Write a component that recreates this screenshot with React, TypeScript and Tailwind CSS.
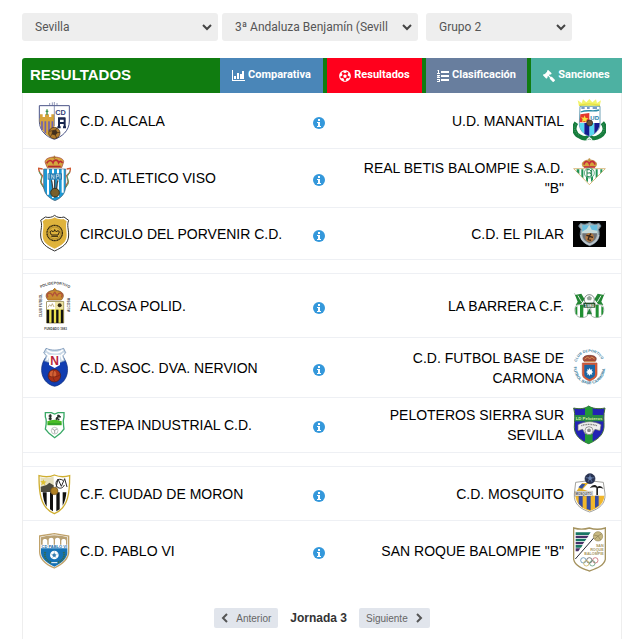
import React from 'react';
import { FaFutbol, FaGavel } from 'react-icons/fa';

interface CrestProps {
  box: string;
  size: string;
  children: React.ReactNode;
}

const Crest: React.FC<CrestProps> = ({ box, size, children }) => (
  <svg viewBox={box} className={`block w-[33px] ${size}`} aria-hidden="true">
    {children}
  </svg>
);

const Alcala = () => (
  <Crest box="54 20 99 114" size="h-[38px]">
    <path d="M58 31h90v46c0 31-24 48-45 55-24-8-45-25-45-55z" fill="#fff" stroke="#4a5487" strokeWidth="3" />
    <path d="M59 69h44v62C80 122 60 106 59 78z" fill="#d6a43c" />
    <path d="M60 57h8v8h7v-8h12v8h7v-8h9v14H60z" fill="#d6a43c" />
    <path d="M81 42v17M77 48h8" stroke="#3c8e4d" strokeWidth="4" />
    <path d="M66 78v26M76 78v36M87 78v30M97 78v22" stroke="#6d62b0" strokeWidth="5" />
    <path d="M103 32v60M89 23v9M97 21v11M111 23v9M103 20v12" stroke="#5c6796" strokeWidth="2" />
    <text x="106" y="58" fontSize="22" fontWeight="bold" fontFamily="Liberation Sans, sans-serif" fill="#34417a">CD</text>
    <path d="M117 96V70h17v26M117 83h17M112 96h10M129 96h9M114 69h22" stroke="#18264f" strokeWidth="6" fill="none" />
    <circle cx="103" cy="113" r="17" fill="#b07b2c" stroke="#3b2b1c" strokeWidth="2" />
    <path d="M98 106l9-2 5 8-6 7-10-3zM88 108l10-2M96 116l-5 8M106 119l4 9M112 112l8-1M107 104l4-6" fill="#43301d" stroke="#3b2b1c" strokeWidth="2" />
  </Crest>
);

const Viso = () => (
  <Crest box="54 177 99 144" size="h-[48px]">
    <path d="M68 222l-13-2 4 12 8 10-5 18 8 15 8 15M140 222l12-2-3 12-9 10 5 18-8 15-8 15" fill="none" stroke="#cf5a33" strokeWidth="4" />
    <path d="M57 230l8 14-2 22 8 12M150 230l-8 14 3 22-8 12" fill="none" stroke="#4da06a" strokeWidth="3" />
    <path d="M76 204c-4-10 9-18 27-18s32 8 27 18l-5 14H82z" fill="#d4a63f" stroke="#a13c32" strokeWidth="2" />
    <path d="M80 205c5-11 15-11 19-2 3-10 14-10 17 0 4-7 9-4 11 1" fill="none" stroke="#bd2c34" strokeWidth="5" />
    <path d="M103 182v10M98 187h10" stroke="#a9722c" strokeWidth="3" />
    <path d="M84 214h38" stroke="#b32b2e" strokeWidth="4" />
    <path d="M71 222h66v50c0 24-14 38-32 45-20-8-34-22-34-45z" fill="#1d9ad6" stroke="#4f6272" strokeWidth="2" />
    <path d="M84 223v76M99 223v86M114 223v83M128 223v70" stroke="#fff" strokeWidth="6" />
    <path d="M83 235h43v19H83z" fill="#267bb0" />
    <path d="M87 251v-14M95 251v-12l7 12v-12M109 251v-13h7v6h-7M120 238v13" fill="none" stroke="#e8f3f5" strokeWidth="2" />
    <path d="M94 256c4 10 2 16 5 27M114 256c-4 10-2 16-5 27M104 254v32" stroke="#444" strokeWidth="4" fill="none" />
    <circle cx="105" cy="293" r="13" fill="#79602b" stroke="#373424" strokeWidth="3" />
  </Crest>
);

const Circulo = () => (
  <Crest box="54 114 99 123" size="h-[41px]">
    <path d="M104 121c7 7 18 8 28 5l14 10c-6 15 0 26 0 44 0 27-20 37-42 48-24-11-42-22-42-48 0-18 6-29 0-44l14-10c10 3 21 1 28-5z" fill="#fff" stroke="#333" strokeWidth="3" />
    <path d="M104 127c8 6 18 7 27 5l9 7c-4 14 0 24 0 42 0 22-17 31-36 40-20-9-36-18-36-40 0-18 5-28 0-42l9-7c9 2 19 1 27-5z" fill="#dfb33c" />
    <circle cx="104" cy="174" r="23" fill="none" stroke="#32270f" strokeWidth="4" strokeDasharray="4 1" />
    <circle cx="104" cy="174" r="18" fill="none" stroke="#987928" strokeWidth="2" />
    <path d="M94 180l-4-9c2-5 8-5 9 0 2-6 9-6 10 0 2-5 8-5 9 0l-4 9zM94 184h20M104 163v6" fill="none" stroke="#30240e" strokeWidth="3" />
  </Crest>
);

const Alcosa = () => (
  <Crest box="54 27 99 159" size="h-[53px]">
    <defs>
      <path id="alcosa-top" d="M62 54q43-22 86 0" />
      <path id="alcosa-left" d="M65 142V66" />
      <path id="alcosa-right" d="M151 126V78" />
    </defs>
    <g fontFamily="Liberation Sans, sans-serif" fontWeight="bold" fill="#444">
      <text fontSize="11"><textPath href="#alcosa-top">POLIDEPORTIVO</textPath></text>
      <text fontSize="10"><textPath href="#alcosa-left">CLUB FUTBOL</textPath></text>
      <text fontSize="10"><textPath href="#alcosa-right">ALCOSA</textPath></text>
      <text x="73" y="179" fontSize="9">FUNDADO 1983</text>
    </g>
    <path d="M84 90c-13-14-3-29 20-29 23 0 34 15 20 29z" fill="#c98c33" stroke="#754b25" strokeWidth="2" />
    <path d="M84 82c-8-14 8-17 14-5l6-11 7 11c6-12 22-9 13 5" fill="none" stroke="#b0503a" strokeWidth="4" />
    <path d="M104 54v12M99 59h10M84 88h40" stroke="#bd7d27" strokeWidth="4" />
    <path d="M80 95h51v64H80z" fill="#ebe14f" stroke="#695b2d" strokeWidth="2" />
    <path d="M81 96h24v22H81z" fill="#fff" />
    <path d="M105 96h25v22h-25z" fill="#eee3a4" />
    <path d="M84 112l5-8 4 5 4-8 5 10" stroke="#a48a51" fill="none" strokeWidth="2" />
    <circle cx="119" cy="106" r="6" fill="#352913" />
    <path d="M84 119v40M98 119v40M112 119v40M126 119v40" stroke="#111" strokeWidth="7" />
  </Crest>
);

const Nervion = () => (
  <Crest box="54 219 99 147" size="h-[49px]">
    <path d="M76 264c-21 29-13 76 28 85 40-9 49-56 27-85z" fill="#123eb1" stroke="#0c2c75" strokeWidth="2" />
    <path d="M78 235c16 7 36 7 53 0l6 13-8 9 6 15-20 8H93l-20-7 6-16-8-8z" fill="#c9d8e6" stroke="#5e7ea7" strokeWidth="2" />
    <path d="M81 239c7 12 39 12 47 0M77 249l9 8-5 13M132 249l-9 8 5 13" fill="none" stroke="#fff" strokeWidth="5" />
    <path d="M87 254h33v31l-16 9-17-9z" fill="#fff" />
    <text x="91" y="285" fontSize="36" fontWeight="bold" fontFamily="Liberation Sans, sans-serif" fill="#b91f3a">N</text>
    <circle cx="103" cy="317" r="19" fill="#a73118" stroke="#3b2330" strokeWidth="2" />
    <circle cx="99" cy="312" r="10" fill="#d36135" />
    <path d="M85 318c12 4 25 4 36-4M103 299c-7 12-5 25 2 36" stroke="#72210f" strokeWidth="2" fill="none" />
  </Crest>
);

const Estepa = () => (
  <Crest box="54 65 99 84" size="h-[28px]">
    <path d="M76 70h18l10 4 10-4h18v13c-5 13-1 24 0 36l-11 13-17 13-17-13-11-13c2-12 6-25 0-36z" fill="#fff" stroke="#39a966" strokeWidth="4" />
    <path d="M82 96c14-6 29-6 43 0v12H82z" fill="#49bd26" />
    <path d="M91 75v18M86 80h9M86 88h9M108 91l10-14M112 78l10 6M108 85l10 6" stroke="#252f29" strokeWidth="5" />
    <path d="M84 104h40" stroke="#238a2f" strokeWidth="3" />
    <circle cx="104" cy="124" r="10" fill="#fff" stroke="#a2aaa5" strokeWidth="2" />
    <path d="M97 119l7 4 7-4M104 123v9" stroke="#777" strokeWidth="2" fill="none" />
  </Crest>
);

const Moron = () => (
  <Crest box="54 246 99 129" size="h-[43px]">
    <path d="M57 257c18 5 34 4 46-2 14 6 30 7 46 2 0 46-2 96-46 114-44-18-46-68-46-114z" fill="#fff" stroke="#cfae30" strokeWidth="4" />
    <path d="M61 262c16 3 30 2 40-3v46H63z" fill="#e5dfbd" />
    <path d="M62 290l18-5 8-7 13 8v20H63z" fill="#4d4b40" />
    <path d="M70 268l3 6 7 1-6 4 2 7-6-4-7 4 3-7-5-5 7-1z" fill="#dec030" />
    <path d="M108 293l6-26 10 22 10-23 7 25M129 271c-15-9-24 3-20 15 4 12 20 11 24-1" fill="none" stroke="#292929" strokeWidth="3" />
    <path d="M65 306h76c-3 27-13 49-38 60-24-11-36-32-38-60z" fill="#fff" />
    <path d="M68 307h12v43c-8-12-11-27-12-43zM90 307h9v57l-9-6zM109 307h10v51l-10 6zM128 307h11c-1 15-4 28-11 40z" fill="#111" />
    <circle cx="103" cy="303" r="11" fill="#b08125" stroke="#71511e" strokeWidth="2" />
  </Crest>
);

const Pablo = () => (
  <Crest box="54 67 99 108" size="h-[36px]">
    <path d="M59 76l44-7 43 7v47c0 25-23 39-43 49-23-10-44-24-44-49z" fill="#fff" stroke="#c0a26a" strokeWidth="4" />
    <path d="M63 80c12-4 25-6 40-6 13 0 28 2 39 6v22H63z" fill="#b9a173" />
    <path d="M68 103V91c0-8 14-8 14 0v12zM86 103V88c0-9 15-9 15 0v15zM105 103V88c0-9 15-9 15 0v15zM124 103V91c0-8 14-8 14 0v12z" fill="#fff" />
    <path d="M63 113h79v14c-2 20-22 32-39 41-18-9-38-21-40-41z" fill="#1672b5" />
    <text x="103" y="112" fontSize="12" textAnchor="middle" fontWeight="bold" fontFamily="Liberation Sans, sans-serif" fill="#176ba8">CD PABLO VI</text>
    <path d="M76 124c-5 15 4 27 18 32M131 124c5 15-4 27-18 32" stroke="#356c52" strokeWidth="6" strokeDasharray="4 2" fill="none" />
    <circle cx="103" cy="133" r="13" fill="#fff" />
    <path d="M103 128l5 4-2 6h-6l-3-6zM103 120v8M91 129l6 3M115 129l-6 3M96 144l4-6M110 144l-4-6" fill="#357daf" stroke="#357daf" strokeWidth="1" />
    <path d="M94 156h18" stroke="#fff" strokeWidth="3" />
  </Crest>
);

const Manantial = () => (
  <Crest box="99 9 99 135" size="h-[45px]">
    <path d="M117 33l-4-17 12 8 4-11 10 9 9-10 9 10 11-9 3 11 12-8-4 17z" fill="#f2f46c" />
    <path d="M117 31c20-6 42-6 63 0" stroke="#e8e044" strokeWidth="4" fill="none" />
    <path d="M109 83c-10 14-8 33 11 42 10 6 21 5 28 0 8 6 21 6 31-1 18-10 19-29 8-41" fill="none" stroke="#167c3d" strokeWidth="13" />
    <path d="M107 88c-6 14-4 26 13 34M189 88c6 14 4 26-13 34" fill="none" stroke="#5fb27a" strokeWidth="2" strokeDasharray="3 4" />
    <path d="M120 34h60v53c0 17-13 29-32 38-18-8-30-21-30-38z" fill="#fff" stroke="#277391" strokeWidth="2" />
    <path d="M121 58l27-4v28h-29z" fill="#e4372e" />
    <path d="M134 61l3 8 8 1-6 5 1 7-7-4-7 3 2-8-5-6 8 1z" fill="#f7e33c" />
    <path d="M119 84h14v32c-9-8-14-16-14-29zM148 84h15v32l-15 8z" fill="#57d8f1" />
    <path d="M133 84h15v40l-15-8zM163 84h16c0 14-6 24-16 32z" fill="#151b90" />
    <path d="M122 51c22-9 36 1 55-6" fill="none" stroke="#2b8ba8" strokeWidth="4" />
    <path d="M124 39h10M141 39h8M158 39h13" fill="none" stroke="#4a7ab8" strokeWidth="5" />
    <text x="151" y="76" fontSize="18" fontWeight="bold" fontFamily="Liberation Sans, sans-serif" fill="#187ba9">UD</text>
    <circle cx="149" cy="84" r="9" fill="#684f38" stroke="#222" strokeWidth="2" />
    <path d="M140 134l8-6 8 6" stroke="#f2f5f2" strokeWidth="4" fill="none" />
  </Crest>
);

const Betis = () => (
  <Crest box="99 189 99 123" size="h-[41px]">
    <path d="M101 221h95l-48 48z" fill="#fff" stroke="#c69b45" strokeWidth="2" />
    <path d="M110 223v7l8 7v-14zM124 223h6v27l-6-6zM138 223h6v39l-6-6zM153 223h6v32l-6 6zM167 223h6v20l-6 6zM181 223h6v6l-6 7z" fill="#209455" />
    <path d="M130 216c-9-12 2-21 18-21s28 9 18 21z" fill="#d6a43c" stroke="#b27c2e" strokeWidth="2" />
    <path d="M132 209c2-13 13-11 16-3 3-9 14-10 17 3M132 216h33" fill="none" stroke="#c52d3d" strokeWidth="5" />
    <path d="M148 189v9M144 193h8" stroke="#b98a36" strokeWidth="2" />
    <circle cx="148" cy="234" r="15" fill="#fff" stroke="#19894b" strokeWidth="2" />
    <path d="M141 223v23M141 224h8q9 5 0 10h-8M149 234q11 6 0 11h-8M155 223v22" fill="none" stroke="#20824c" strokeWidth="3" />
  </Crest>
);

const Pilar = () => (
  <Crest box="99 375 99 78" size="h-[26px]">
    <path d="M99 375h99v78H99z" fill="#020202" />
    <path d="M122 382c9 4 17 4 27-3 9 7 18 7 28 3l6 8-7 10c5 22 0 39-27 49-27-11-32-27-26-49l-7-10z" fill="#a8b5b8" stroke="#697f8e" strokeWidth="3" />
    <path d="M127 387c15 2 31 2 45 0v24h-45z" fill="#68bddd" />
    <path d="M126 407l14-8 8-13 7 15 17 3v9h-46z" fill="#c7dcdb" />
    <path d="M127 412h44c0 15-8 24-22 30-15-6-22-14-22-30z" fill="#6e7175" />
    <circle cx="149" cy="424" r="13" fill="#b37b43" />
    <path d="M139 418l9 2 5-7M148 420l-4 11M148 421l11 3M143 430l10 3" stroke="#35251b" strokeWidth="4" fill="none" />
    <path d="M122 417c2 17 13 25 27 29 13-4 25-14 27-29" fill="none" stroke="#c0c8cf" strokeWidth="4" />
  </Crest>
);

const Barrera = () => (
  <Crest box="99 65 99 81" size="h-[27px]">
    <path d="M103 69l36 54M194 69l-36 54" stroke="#829189" strokeWidth="2" />
    <path d="M105 74l19-4 10 17-12 15-15 2 6-10z" fill="#238633" />
    <path d="M192 74l-19-4-10 17 12 15 15 2-6-10z" fill="#238633" />
    <path d="M114 76l11 19M183 76l-11 19" stroke="#dcefe0" strokeWidth="3" />
    <circle cx="148" cy="88" r="15" fill="#fff" stroke="#40534a" strokeWidth="2" />
    <path d="M140 82l8-6 8 6-3 8h-10z" fill="#97a49c" />
    <path d="M108 106c12-6 26-3 36 6l-2 24c-9 9-26 7-33-2-5-9-6-19-1-28z" fill="#fff" stroke="#7a8f80" strokeWidth="2" />
    <path d="M188 106c-12-6-26-3-36 6l2 24c9 9 26 7 33-2 5-9 6-19 1-28z" fill="#fff" stroke="#7a8f80" strokeWidth="2" />
    <path d="M120 104h10v37h-10zM167 104h9v37h-9zM106 112l6-5v28l-5-5zM190 112l-6-5v28l5-5z" fill="#209032" />
    <path d="M130 97h36v15h-36z" fill="#22502c" />
    <text x="148" y="109" fontSize="13" textAnchor="middle" fontWeight="bold" fontFamily="Liberation Sans, sans-serif" fill="#fff">1980</text>
    <path d="M148 114l8 18h-16z" fill="#258039" />
  </Crest>
);

const Carmona = () => (
  <Crest box="99 233 99 111" size="h-[37px]">
    <defs>
      <path id="carmona-top" d="M110 272c10-40 66-40 78 0" />
      <path id="carmona-bottom" d="M101 286c3 70 92 70 95 0" />
    </defs>
    <g fontFamily="Liberation Sans, sans-serif" fontWeight="bold" fill="#387c9c">
      <text fontSize="11"><textPath href="#carmona-top">CLUB DEPORTIVO</textPath></text>
      <text fontSize="12"><textPath href="#carmona-bottom">FUTBOL BASE CARMONA</textPath></text>
    </g>
    <path d="M132 270c-9-13 4-18 17-18 14 0 25 6 17 18z" fill="#a74c39" stroke="#713b2d" strokeWidth="2" />
    <path d="M134 263l9-6 6 6 6-6 9 6M133 271h32" stroke="#d69455" strokeWidth="3" fill="none" />
    <path d="M127 275h44v32c0 12-10 17-22 22-12-5-22-10-22-22z" fill="#db5a35" stroke="#aa5341" strokeWidth="2" />
    <path d="M133 280h32v29c0 8-8 11-16 15-8-4-16-7-16-15z" fill="#1b66a5" />
    <path d="M149 290l2 5 6-1-2 5 5 3-5 3 2 5-6-1-2 5-3-5-5 1 2-5-5-3 5-3-2-5 5 1z" fill="#fff" />
  </Crest>
);

const Peloteros = () => (
  <Crest box="99 396 99 132" size="h-[44px]">
    <path d="M101 411c18 4 35 2 45-6 12 8 29 10 49 6-6 23-2 38-3 58-2 25-23 39-46 49-23-8-43-25-43-49 0-21 4-35-2-58z" fill="#2222b4" stroke="#416d37" strokeWidth="3" />
    <path d="M135 411l11-5 12 5v102l-12 5-11-5z" fill="#239a37" />
    <path d="M105 432h84v19h-84z" fill="#288945" />
    <text x="147" y="446" fontSize="13" textAnchor="middle" fontWeight="bold" fontFamily="Liberation Sans, sans-serif" fill="#d9ee9c">LD Peloteros</text>
    <path d="M114 461c21-12 49-12 69 0l-3 18-15-4-8 13h-22l-7-13-14 4z" fill="#eee" stroke="#6f746f" strokeWidth="2" />
    <circle cx="147" cy="479" r="12" fill="#f5f5f5" stroke="#686868" strokeWidth="2" />
    <path d="M124 464c15-5 31-5 47 0" stroke="#777" strokeWidth="4" strokeDasharray="3 2" fill="none" />
    <path d="M141 476l6-4 6 4-2 7h-8z" fill="#898989" />
  </Crest>
);

const Mosquito = () => (
  <Crest box="99 70 99 123" size="h-[41px]">
    <path d="M107 98l40-5 43 5 5 35c2 30-17 44-46 54-30-10-48-25-46-54z" fill="#fff" stroke="#73736c" strokeWidth="2" />
    <path d="M106 138h87c-1 24-20 38-44 46-24-8-41-22-43-46z" fill="#f1b72b" />
    <path d="M116 138h12v36l-12-12zM140 138h12v44l-12-4zM165 138h11v30l-11 7z" fill="#344ba5" />
    <path d="M110 124l16-23 20-2-18 20 18 6z" fill="#e4b12b" />
    <path d="M115 113l11-11 10 2-10 13z" fill="#3351a1" />
    <circle cx="150" cy="87" r="15" fill="#293453" stroke="#1d2745" strokeWidth="2" />
    <path d="M145 84l5-4 5 4-2 6h-6zM150 74v6M138 84l7 1M162 84l-7 1M144 97l3-7M156 97l-3-7" fill="#6d87b5" stroke="#6d87b5" strokeWidth="2" />
    <path d="M149 116c7-12 18-13 23-5 7-5 14-1 19 7-8-4-12-3-17-2v20h-5v-22c-8-2-14-1-20 2z" fill="#222" />
    <path d="M105 125h53v14h-53z" fill="#eee" stroke="#7d7a67" strokeWidth="1" />
    <text x="131" y="136" fontSize="9" textAnchor="middle" fontWeight="bold" fontFamily="Liberation Sans, sans-serif" fill="#454545">MOSQUITO</text>
  </Crest>
);

const SanRoque = () => (
  <Crest box="99 229 99 147" size="h-[49px]">
    <path d="M101 235c17 5 34 4 47 0 15 5 32 5 48 0v94c-4 20-29 28-48 35-19-7-43-15-47-35z" fill="#fff" stroke="#a5935f" strokeWidth="4" />
    <path d="M107 248h45l-6 8h-39zM107 267h33l-6 8h-27zM107 286h21l-5 8h-16z" fill="#197663" />
    <path d="M107 258h39l-5 7h-34zM107 277h26l-5 7h-21zM107 296h14l-6 9h-8z" fill="#493168" />
    <path d="M106 328l56-64" stroke="#282a35" strokeWidth="3" />
    <circle cx="174" cy="260" r="14" fill="#c6b780" stroke="#9a8d5e" strokeWidth="2" />
    <path d="M162 256l12 3 11-7M165 268l9-9 8 12" stroke="#8e8156" fill="none" strokeWidth="2" />
    <g fontFamily="Liberation Sans, sans-serif" fontWeight="bold" fontSize="11" fill="#a79663" textAnchor="end">
      <text x="191" y="292">SAN</text>
      <text x="191" y="304">ROQUE</text>
      <text x="191" y="316">BALOMPIE</text>
    </g>
    <g fill="none" strokeWidth="2">
      <circle cx="130" cy="332" r="8" stroke="#3c79a3" />
      <circle cx="148" cy="332" r="8" stroke="#444" />
      <circle cx="166" cy="332" r="8" stroke="#bb4650" />
      <circle cx="139" cy="341" r="8" stroke="#c3a13f" />
      <circle cx="157" cy="341" r="8" stroke="#458b65" />
    </g>
  </Crest>
);

const matchGroups = [
  [
    { home: 'C.D. ALCALA', away: 'U.D. MANANTIAL', homeCrest: <Alcala />, awayCrest: <Manantial /> },
    { home: 'C.D. ATLETICO VISO', away: 'REAL BETIS BALOMPIE S.A.D. "B"', homeCrest: <Viso />, awayCrest: <Betis /> },
    { home: 'CIRCULO DEL PORVENIR C.D.', away: 'C.D. EL PILAR', homeCrest: <Circulo />, awayCrest: <Pilar /> },
  ],
  [
    { home: 'ALCOSA POLID.', away: 'LA BARRERA C.F.', homeCrest: <Alcosa />, awayCrest: <Barrera /> },
    { home: 'C.D. ASOC. DVA. NERVION', away: 'C.D. FUTBOL BASE DE CARMONA', homeCrest: <Nervion />, awayCrest: <Carmona /> },
    { home: 'ESTEPA INDUSTRIAL C.D.', away: 'PELOTEROS SIERRA SUR SEVILLA', homeCrest: <Estepa />, awayCrest: <Peloteros /> },
  ],
  [
    { home: 'C.F. CIUDAD DE MORON', away: 'C.D. MOSQUITO', homeCrest: <Moron />, awayCrest: <Mosquito /> },
    { home: 'C.D. PABLO VI', away: 'SAN ROQUE BALOMPIE "B"', homeCrest: <Pablo />, awayCrest: <SanRoque /> },
  ],
];

const ChartIcon = () => (
  <svg viewBox="0 0 13 11" className="h-[11px] w-[13px]" fill="currentColor" aria-hidden="true">
    <path d="M0 0h1v10h12v1H0zM2 6h2v3H2zM5 3h2v6H5zM8 4h2v5H8zM10 1h2v8h-2z" />
  </svg>
);

const ListIcon = () => (
  <svg viewBox="0 0 12 12" className="h-3 w-3" fill="currentColor" aria-hidden="true">
    <path d="M4 1h8v2H4zM4 5h8v2H4zM4 9h8v2H4zM1 0h1v3h1v1H0V3h1V1H0zM0 5h3v1L1 7h2v1H0V7l1-1H0zM0 9h3v3H0v-1h2v-1H0z" />
  </svg>
);

const InfoIcon = () => (
  <svg viewBox="0 0 12 12" className="h-3 w-3" aria-hidden="true">
    <circle cx="6" cy="6" r="6" fill="#3498db" />
    <path d="M5 2h2v2H5zM4 5h3v4h1v1H4V9h1V6H4z" fill="#fff" />
  </svg>
);

const tabs = [
  { label: 'Comparativa', icon: <ChartIcon />, style: 'w-[103px] bg-[#4a86b8]' },
  { label: 'Resultados', icon: <FaFutbol className="h-3 w-3" />, style: 'w-[95px] bg-[#ff001c]' },
  { label: 'Clasificación', icon: <ListIcon />, style: 'w-[101px] bg-[#687e9e]' },
  { label: 'Sanciones', icon: <FaGavel className="h-3 w-3 -scale-x-100" />, style: 'w-[91px] bg-[#4db1a2]' },
];

interface FilterProps {
  label: string;
  value: string;
  width: string;
}

const Filter: React.FC<FilterProps> = ({ label, value, width }) => (
  <div className={`relative ${width}`}>
    <select
      aria-label={label}
      className="h-7 w-full appearance-none overflow-hidden rounded-[3px] bg-[#eee] pl-[13px] pr-[30px] font-[Roboto,sans-serif] text-xs text-[#555]"
    >
      <option>{value}</option>
    </select>
    <svg viewBox="0 0 10 7" className="pointer-events-none absolute right-1.5 top-[11px] h-[7px] w-[10px]" aria-hidden="true">
      <path d="M1 1l4 4 4-4" fill="none" stroke="#444" strokeWidth="2" />
    </svg>
  </div>
);

const Chevron: React.FC<{ d: string }> = ({ d }) => (
  <svg viewBox="0 0 7 10" className="h-[10px] w-[7px]" aria-hidden="true">
    <path d={d} fill="none" stroke="#555" strokeWidth="2" />
  </svg>
);

export default function App() {
  return (
    <main className="bg-white pl-[22px] pr-[10px] pt-[13px] font-['Liberation_Sans',Arial,sans-serif] text-black">
      <form className="mb-[17px] flex">
        <Filter label="Provincia" value="Sevilla" width="mr-1 w-[196px]" />
        <Filter label="Competición" value="3ª Andaluza Benjamín (Sevilla)" width="mr-2 w-[196px]" />
        <Filter label="Grupo" value="Grupo 2" width="w-[146px]" />
      </form>

      <section>
        <header className="flex h-[35px] items-center overflow-hidden rounded-tl-[3px] bg-[#107c10] text-white">
          <h1 className="flex-1 pl-2 text-[15px] font-bold">RESULTADOS</h1>
          <nav className="flex gap-1 self-stretch">
            {tabs.map((tab) => (
              <a
                key={tab.label}
                href="#"
                className={`flex items-center justify-center gap-[3px] font-[Roboto,sans-serif] text-[11px] font-bold ${tab.style}`}
              >
                {tab.icon}
                {tab.label}
              </a>
            ))}
          </nav>
        </header>

        <div className="border-x border-[#eee] pb-[11px]">
          <table className="w-full table-fixed border-separate border-spacing-0 text-sm">
            <colgroup>
              <col className="w-[57px]" />
              <col />
              <col className="w-16" />
              <col />
              <col className="w-[57px]" />
            </colgroup>
            {matchGroups.map((group, index) => (
              <tbody key={index} className="[&_td]:border-b [&_td]:border-[#eef0f4] last:[&_tr:last-child_td]:border-b-0">
                {index > 0 && (
                  <tr>
                    <td colSpan={5} className="h-[14px] p-0" />
                  </tr>
                )}
                {group.map((match) => (
                  <tr key={match.home}>
                    <td className="py-[5px] pl-[15px]">{match.homeCrest}</td>
                    <td className="leading-5">{match.home}</td>
                    <td className="pr-1.5 pt-1">
                      <a href="#" aria-label={`${match.home} - ${match.away}`} className="flex justify-center">
                        <InfoIcon />
                      </a>
                    </td>
                    <td className="text-right leading-5">{match.away}</td>
                    <td className="py-[5px] pl-[9px]">{match.awayCrest}</td>
                  </tr>
                ))}
              </tbody>
            ))}
          </table>

          <nav className="mt-7 flex items-center justify-center gap-3">
            <button type="button" className="flex h-5 items-center gap-2 rounded-[2px] bg-[#e1e5ec] px-[7px] text-[10px] text-[#666]">
              <Chevron d="M6 1L2 5l4 4" />
              Anterior
            </button>
            <strong className="text-xs leading-4 text-[#333]">Jornada 3</strong>
            <button type="button" className="flex h-5 items-center gap-2 rounded-[2px] bg-[#e1e5ec] px-[7px] text-[10px] text-[#666]">
              Siguiente
              <Chevron d="M1 1l4 4-4 4" />
            </button>
          </nav>
        </div>
      </section>
    </main>
  );
}
